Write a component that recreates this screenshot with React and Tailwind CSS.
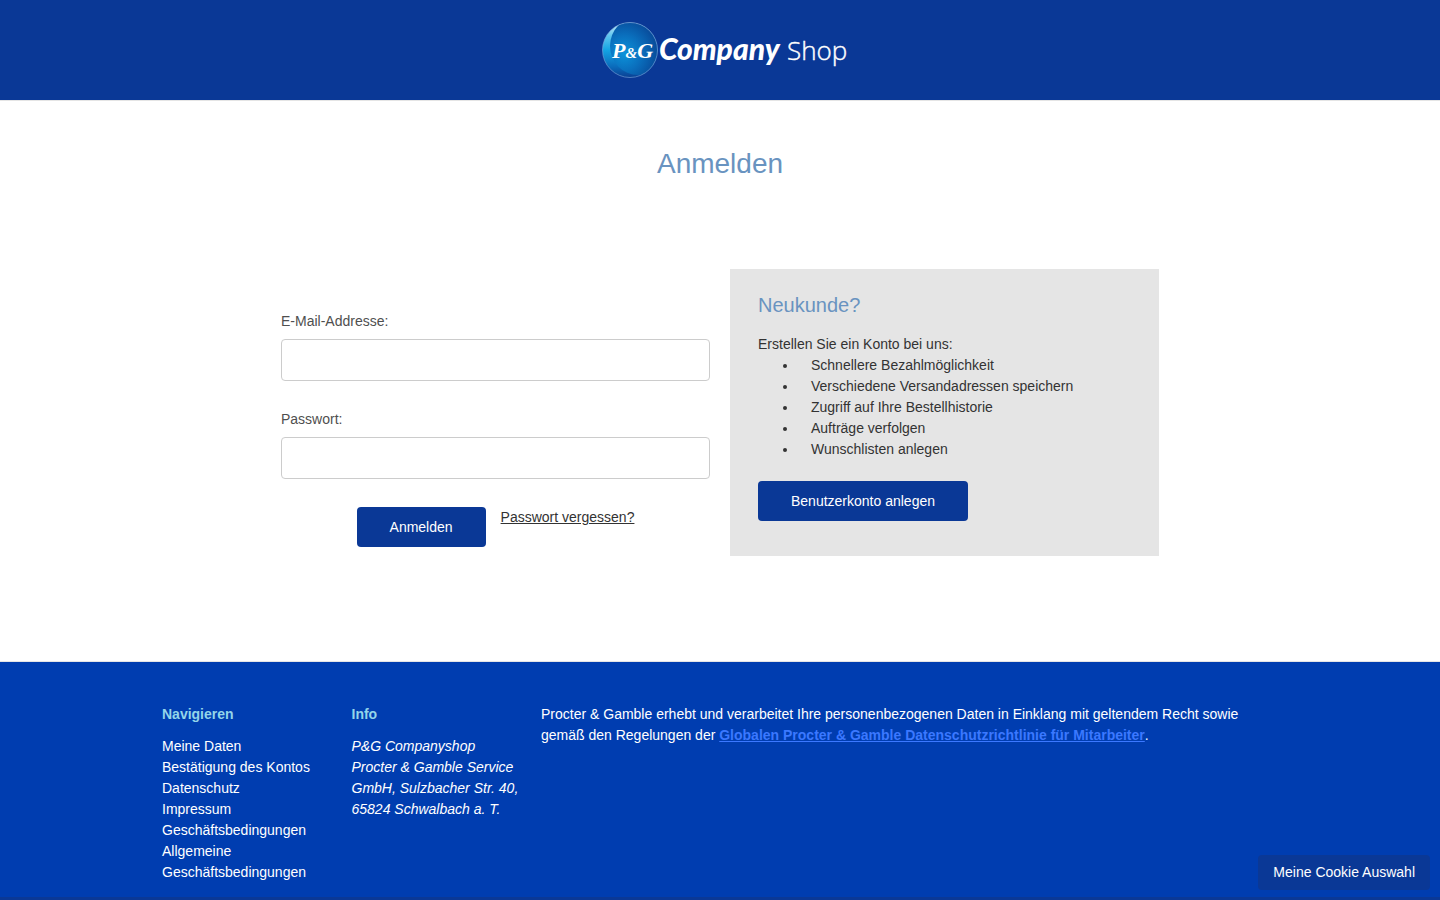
const benefits = [
  'Schnellere Bezahlmöglichkeit',
  'Verschiedene Versandadressen speichern',
  'Zugriff auf Ihre Bestellhistorie',
  'Aufträge verfolgen',
  'Wunschlisten anlegen',
];

const links = [
  'Meine Daten',
  'Bestätigung des Kontos',
  'Datenschutz',
  'Impressum',
  'Geschäftsbedingungen',
  'Allgemeine Geschäftsbedingungen',
];

function Logo() {
  return (
    <svg width="246" height="60" viewBox="0 0 246 60" role="img" aria-label="P&G Company Shop">
      <defs>
        <radialGradient id="globe" cx="0.25" cy="0.62" r="0.75">
          <stop offset="0" stopColor="#0c93da" />
          <stop offset="0.4" stopColor="#0a70be" />
          <stop offset="0.75" stopColor="#08509f" />
          <stop offset="1" stopColor="#073a85" />
        </radialGradient>
        <linearGradient id="crescent" x1="0.35" y1="0" x2="0.35" y2="1">
          <stop offset="0" stopColor="#c8ecfa" />
          <stop offset="0.25" stopColor="#5cc4ee" />
          <stop offset="0.5" stopColor="#14a4e4" />
          <stop offset="0.8" stopColor="#0a6cbc" />
          <stop offset="1" stopColor="#0a3f93" />
        </linearGradient>
        <clipPath id="disc">
          <circle cx="29" cy="30" r="27.5" />
        </clipPath>
      </defs>
      <circle cx="29" cy="30" r="27.5" fill="url(#crescent)" />
      <g clipPath="url(#disc)">
        <ellipse cx="37" cy="26" rx="28" ry="29" fill="url(#globe)" />
      </g>
      <circle cx="29" cy="30" r="27.5" fill="none" stroke="#7fa9dc" strokeOpacity="0.6" strokeWidth="1" />
      <text x="11" y="38" fill="#fff" fontFamily="'Liberation Serif', serif" fontWeight="700" fontStyle="italic" fontSize="22">
        P<tspan fontSize="15">&amp;</tspan>G
      </text>
      <text x="58" y="40" fill="#fff" fontFamily="Lato, sans-serif" fontWeight="900" fontStyle="italic" fontSize="30">
        Company
      </text>
      <text x="186" y="40" fill="#fff" stroke="#fff" strokeWidth="0.4" fontFamily="'Open Sans', sans-serif" fontWeight="300" fontSize="26">
        Shop
      </text>
    </svg>
  );
}

function Field({ id, label, type }) {
  return (
    <div className="mb-7">
      <label htmlFor={id} className="mb-[7px] block text-[#4f4f4f]">{label}</label>
      <input id={id} type={type} className="block h-[42px] w-full rounded border border-[#cccccc] bg-white px-3 text-[#333333]" />
    </div>
  );
}

export default function App() {
  return (
    <div className="flex min-h-screen flex-col bg-white font-['Liberation_Sans',Arial,sans-serif] text-sm/[21px] text-[#333333]">
      <header className="border-b border-[#e5e5e5] bg-[#0a3896]">
        <div className="flex h-[100px] items-center justify-center pl-2">
          <a href="#"><Logo /></a>
        </div>
      </header>

      <main className="px-5 pt-[42px] pb-[105px]">
        <h1 className="text-center text-[28px]/[42px] text-[#6993c0]">Anmelden</h1>
        <div className="mx-auto mt-[84px] grid max-w-[878px] grid-cols-2 gap-5">
          <form className="pt-[42px]" onSubmit={(e) => e.preventDefault()}>
            <Field id="email" label="E-Mail-Addresse:" type="email" />
            <Field id="password" label="Passwort:" type="password" />
            <div className="flex items-start justify-center gap-[15px]">
              <button type="submit" className="h-10 rounded bg-[#0a3896] px-[33px] text-white">Anmelden</button>
              <a href="#" className="underline">Passwort vergessen?</a>
            </div>
          </form>
          <section className="bg-[#e5e5e5] px-7 pt-[21px] pb-[35px]">
            <h2 className="mb-3.5 text-xl/[30px] text-[#6993c0]">Neukunde?</h2>
            <p>Erstellen Sie ein Konto bei uns:</p>
            <ul className="mb-[21px] list-disc pl-10">
              {benefits.map((b) => (
                <li key={b} className="pl-[13px]">{b}</li>
              ))}
            </ul>
            <button type="button" className="h-10 rounded bg-[#0a3896] px-[33px] text-white">Benutzerkonto anlegen</button>
          </section>
        </div>
      </main>

      <footer className="flex grow flex-col border-t border-[#e5e5e5] bg-[#0a3896] text-white">
        <div className="bg-[#003db0] px-5 pt-[42px] pb-3.5">
          <div className="mx-auto grid max-w-[1116px] grid-cols-6 gap-[21px]">
            <nav aria-labelledby="nav-title">
              <h3 id="nav-title" className="mb-[11px] font-bold text-[#93d5e9]">Navigieren</h3>
              <ul>
                {links.map((l) => (
                  <li key={l}><a href="#">{l}</a></li>
                ))}
              </ul>
            </nav>
            <div>
              <h3 className="mb-[11px] font-bold text-[#93d5e9]">Info</h3>
              <address>
                P&amp;G Companyshop<br />
                Procter &amp; Gamble Service<br />
                GmbH, Sulzbacher Str. 40,<br />
                65824 Schwalbach a. T.
              </address>
            </div>
            <p className="col-span-4">
              Procter &amp; Gamble erhebt und verarbeitet Ihre personenbezogenen Daten in Einklang mit geltendem Recht sowie gemäß den Regelungen der{' '}
              <a href="#" className="font-bold text-[#3b78ff] underline">Globalen Procter &amp; Gamble Datenschutzrichtlinie für Mitarbeiter</a>.
            </p>
          </div>
        </div>
      </footer>

      <button type="button" className="fixed right-2.5 bottom-2.5 rounded bg-[#0a3896] px-[15px] py-[7px] text-white">
        Meine Cookie Auswahl
      </button>
    </div>
  );
}
